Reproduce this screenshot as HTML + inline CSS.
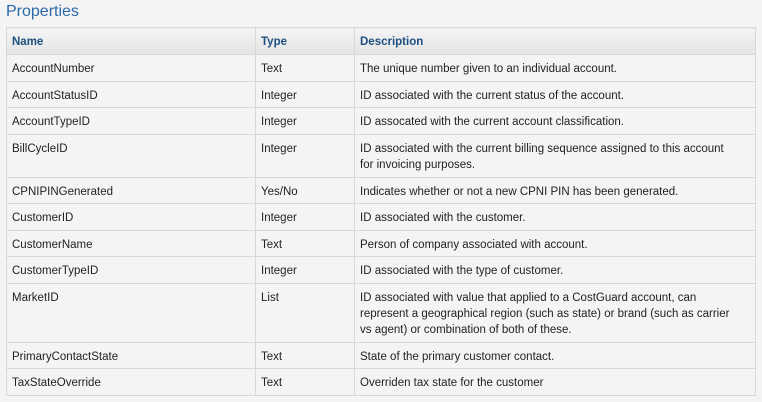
<!DOCTYPE html>
<html><head><style>
body{margin:0;background:#f4f4f4;font-family:"Liberation Sans",sans-serif;width:762px;height:402px;overflow:hidden}
h1{position:absolute;left:6px;top:3px;margin:0;font-weight:normal;font-size:16px;color:#2a69a8}
table{position:absolute;left:6px;top:27px;width:750px;border-collapse:collapse;font-size:11.5px;color:#222}
td,th{border:1px solid #d8d8d8;padding:6px 5px 0 5px;line-height:16px;vertical-align:top;text-align:left;box-sizing:content-box}
th{background:linear-gradient(#f4f4f4,#e4e4e4);color:#1d4f80;font-weight:bold}
.a td,.a th{height:20px}.b td{height:19px}.c td{height:36px}.d td{height:52px}
</style></head><body>
<h1>Properties</h1>
<table>
<tr class="a"><th style="width:238px">Name</th><th style="width:88px">Type</th><th>Description</th></tr>
<tr class="a"><td>AccountNumber</td><td>Text</td><td>The unique number given to an individual account.</td></tr>
<tr class="b"><td>AccountStatusID</td><td>Integer</td><td>ID associated with the current status of the account.</td></tr>
<tr class="a"><td>AccountTypeID</td><td>Integer</td><td>ID assocated with the current account classification.</td></tr>
<tr class="c"><td>BillCycleID</td><td>Integer</td><td>ID associated with the current billing sequence assigned to this account<br>for invoicing purposes.</td></tr>
<tr class="b"><td>CPNIPINGenerated</td><td>Yes/No</td><td>Indicates whether or not a new CPNI PIN has been generated.</td></tr>
<tr class="a"><td>CustomerID</td><td>Integer</td><td>ID associated with the customer.</td></tr>
<tr class="b"><td>CustomerName</td><td>Text</td><td>Person of company associated with account.</td></tr>
<tr class="a"><td>CustomerTypeID</td><td>Integer</td><td>ID associated with the type of customer.</td></tr>
<tr class="d"><td>MarketID</td><td>List</td><td>ID associated with value that applied to a CostGuard account, can<br>represent a geographical region (such as state) or brand (such as carrier<br>vs agent) or combination of both of these.</td></tr>
<tr class="b"><td>PrimaryContactState</td><td>Text</td><td>State of the primary customer contact.</td></tr>
<tr class="a"><td>TaxStateOverride</td><td>Text</td><td>Overriden tax state for the customer</td></tr>
</table>
</body></html>
